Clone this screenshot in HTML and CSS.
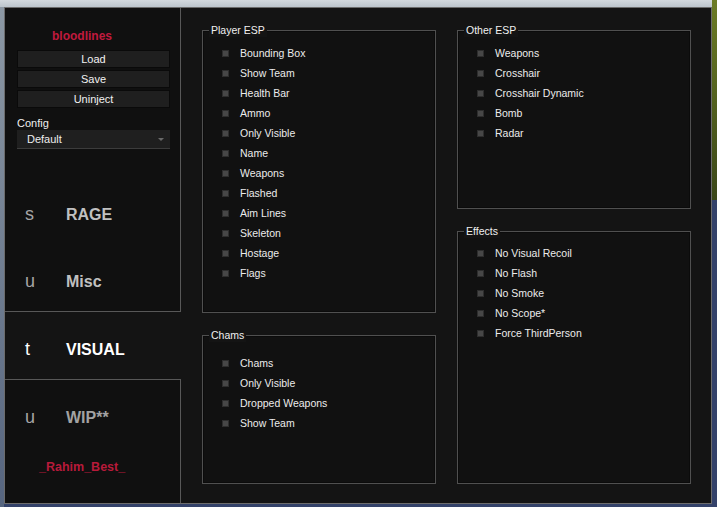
FILE: index.html
```html
<!DOCTYPE html>
<html lang="en">
<head>
    <meta charset="UTF-8">
    <title>bloodlines</title>
    <link rel="stylesheet" href="styles.css">
</head>
<body>
    <div class="window">
        <!-- Sidebar -->
        <div class="sidebar">
            <div class="side-top">
                <div class="brand">bloodlines</div>
                <button class="side-btn">Load</button>
                <button class="side-btn">Save</button>
                <button class="side-btn">Uninject</button>

                <div class="config-label">Config</div>
                <div class="dropdown">
                    <span>Default</span>
                    <span class="arrow"></span>
                </div>

                <div class="tab tab-first"><span class="tab-icon">s</span><span class="tab-name">RAGE</span></div>
                <div class="tab"><span class="tab-icon">u</span><span class="tab-name">Misc</span></div>
            </div>

            <div class="tab tab-active"><span class="tab-icon">t</span><span class="tab-name">VISUAL</span></div>

            <div class="side-bottom">
                <div class="tab"><span class="tab-icon">u</span><span class="tab-name dim">WIP**</span></div>
                <div class="credit">_Rahim_Best_</div>
            </div>
        </div>

        <!-- Visual options -->
        <div class="content">
            <div class="column">
                <div class="group group-player">
                    <div class="group-title">Player ESP</div>
                    <ul class="options">
                        <li><span class="check"></span>Bounding Box</li>
                        <li><span class="check"></span>Show Team</li>
                        <li><span class="check"></span>Health Bar</li>
                        <li><span class="check"></span>Ammo</li>
                        <li><span class="check"></span>Only Visible</li>
                        <li><span class="check"></span>Name</li>
                        <li><span class="check"></span>Weapons</li>
                        <li><span class="check"></span>Flashed</li>
                        <li><span class="check"></span>Aim Lines</li>
                        <li><span class="check"></span>Skeleton</li>
                        <li><span class="check"></span>Hostage</li>
                        <li><span class="check"></span>Flags</li>
                    </ul>
                </div>
                <div class="group group-chams">
                    <div class="group-title">Chams</div>
                    <ul class="options">
                        <li><span class="check"></span>Chams</li>
                        <li><span class="check"></span>Only Visible</li>
                        <li><span class="check"></span>Dropped Weapons</li>
                        <li><span class="check"></span>Show Team</li>
                    </ul>
                </div>
            </div>
            <div class="column">
                <div class="group group-other">
                    <div class="group-title">Other ESP</div>
                    <ul class="options">
                        <li><span class="check"></span>Weapons</li>
                        <li><span class="check"></span>Crosshair</li>
                        <li><span class="check"></span>Crosshair Dynamic</li>
                        <li><span class="check"></span>Bomb</li>
                        <li><span class="check"></span>Radar</li>
                    </ul>
                </div>
                <div class="group group-effects">
                    <div class="group-title">Effects</div>
                    <ul class="options">
                        <li><span class="check"></span>No Visual Recoil</li>
                        <li><span class="check"></span>No Flash</li>
                        <li><span class="check"></span>No Smoke</li>
                        <li><span class="check"></span>No Scope*</li>
                        <li><span class="check"></span>Force ThirdPerson</li>
                    </ul>
                </div>
            </div>
        </div>
    </div>
</body>
</html>
```

FILE: styles.css
```css
html, body {
    height: 507px;
    overflow: hidden;
}
body {
    margin: 0;
    font-family: "Liberation Sans", Arial, sans-serif;
    background:
        linear-gradient(#6b7b25, #3a4618) right top / 5px 200px no-repeat,
        linear-gradient(#d3d9de, #bcc5cc) left top / 100% 7px no-repeat,
        linear-gradient(#8d99a5, #56657f) left top / 4px 100% no-repeat,
        #34426a;
}
.window {
    margin: 7px 0 0 4px;
    width: 708px;
    height: 497px;
    box-sizing: border-box;
    border: 1px solid #6c6c6c;
    background-color: #141414;
    display: grid;
    grid-template-columns: 176px 1fr;
}

/* sidebar */
.sidebar {
    display: flex;
    flex-direction: column;
}
.side-top {
    height: 304px;
    box-sizing: border-box;
    border-right: 1px solid #585858;
    border-bottom: 1px solid #585858;
    background-color: #101010;
    padding: 21px 10px 0 12px;
    display: flex;
    flex-direction: column;
}
.brand {
    margin-left: 35px;
    font-size: 12px;
    line-height: 14px;
    font-weight: bold;
    color: #c01a3e;
}
.side-btn {
    height: 18px;
    margin-top: 2px;
    padding: 0;
    background-color: #1f1f1f;
    border: 1px solid #0a0a0a;
    color: #f2f2f2;
    font-family: "Liberation Sans", Arial, sans-serif;
    font-size: 11px;
}
.brand + .side-btn {
    margin-top: 7px;
}
.config-label {
    margin-top: 8px;
    font-size: 11px;
    line-height: 14px;
    color: #eeeeee;
}
.dropdown {
    height: 19px;
    box-sizing: border-box;
    background-color: #1f1f1f;
    border-bottom: 1px solid #3c3c3c;
    padding: 0 6px 0 10px;
    display: flex;
    align-items: center;
    justify-content: space-between;
    font-size: 11px;
    color: #eeeeee;
}
.arrow {
    width: 0;
    height: 0;
    border-left: 3px solid transparent;
    border-right: 3px solid transparent;
    border-top: 3px solid #6a6a6a;
}
.tab {
    height: 67px;
    flex-shrink: 0;
    box-sizing: border-box;
    padding: 8px 0 0 20px;
    display: flex;
    align-items: center;
    color: #c0c0c0;
}
.side-top .tab {
    margin-left: -12px;
}
.tab-first {
    margin-top: 28px;
}
.tab-icon {
    width: 41px;
    font-size: 18px;
    color: #a6a6a6;
}
.tab-name {
    font-size: 16px;
    font-weight: bold;
}
.tab-name.dim {
    color: #a2a2a2;
}
.tab-active {
    color: #ffffff;
}
.tab-active .tab-icon {
    color: #ffffff;
}
.side-bottom {
    flex: 1;
    border-top: 1px solid #585858;
    border-right: 1px solid #585858;
    background-color: #101010;
}
.credit {
    margin: 13px 0 0 34px;
    font-size: 12.5px;
    line-height: 14px;
    font-weight: bold;
    color: #b81a3a;
}

/* option groups */
.content {
    padding: 22px 0 0 21px;
    display: grid;
    grid-template-columns: 234px 234px;
    column-gap: 21px;
    align-items: start;
}
.column {
    display: flex;
    flex-direction: column;
}
.group {
    box-sizing: border-box;
    border: 1px solid #505050;
    box-shadow: inset 0 0 0 1px #0b0b0b;
    background-color: #111111;
}
.group-player { height: 283px; }
.group-chams { height: 149px; margin-top: 22px; }
.group-other { height: 179px; }
.group-effects { height: 253px; margin-top: 22px; }
.group-title {
    width: fit-content;
    margin: -7px 0 0 6px;
    padding: 0 2px;
    background-color: #141414;
    font-size: 10.5px;
    line-height: 13px;
    color: #f0f0f0;
}
.options {
    list-style: none;
    margin: 6px 0 0 0;
    padding: 0 0 0 19px;
}
.group-chams .options { margin-top: 11px; }
.group-effects .options { margin-top: 5px; }
.options li {
    height: 20px;
    display: flex;
    align-items: center;
    font-size: 10.5px;
    color: #ececec;
}
.check {
    width: 7px;
    height: 7px;
    box-sizing: border-box;
    background-color: #474747;
    border: 1px solid #2e2e2e;
    margin-right: 11px;
}
```
